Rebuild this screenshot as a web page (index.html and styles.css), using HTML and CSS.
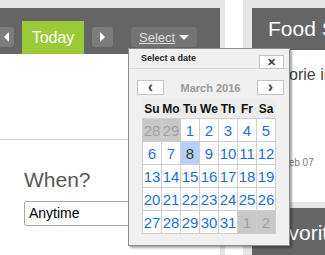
FILE: index.html
```html
<!doctype html>
<html lang="en">
  <head>
    <meta charset="UTF-8" />
    <title>Diary</title>
    <link rel="stylesheet" href="styles.css">
  </head>
  <body>
    <div class="layout">
      <div class="main">
        <div class="date-bar">
          <button class="nav-btn prev"><span class="tri-left"></span></button>
          <div class="today-tab">Today</div>
          <button class="nav-btn next"><span class="tri-right"></span></button>
          <a class="select-link" href="#"><span>Select</span> <span class="tri-down"></span></a>
        </div>
        <div class="main-body">
          <div class="when-label">When?</div>
          <div class="when-input">Anytime</div>
        </div>
      </div>
      <div class="strip"></div>
      <div class="side">
        <div class="card-head">Food Summary</div>
        <div class="card-body">
          <div class="card-text">Calorie intake</div>
          <div class="card-date">Sat, Feb 07</div>
        </div>
        <div class="card-head second">Favorites</div>
      </div>
    </div>

    <div class="datepicker">
      <div class="dp-header">
        <span class="dp-title">Select a date</span>
        <button class="dp-close">&#x2715;</button>
      </div>
      <div class="dp-month">
        <button class="dp-arrow">&lsaquo;</button>
        <span class="dp-month-name">March 2016</span>
        <button class="dp-arrow">&rsaquo;</button>
      </div>
      <table class="dp-grid">
        <thead>
          <tr><th>Su</th><th>Mo</th><th>Tu</th><th>We</th><th>Th</th><th>Fr</th><th>Sa</th></tr>
        </thead>
        <tbody>
          <tr><td class="other">28</td><td class="other">29</td><td>1</td><td>2</td><td>3</td><td>4</td><td>5</td></tr>
          <tr><td>6</td><td>7</td><td class="selected">8</td><td>9</td><td>10</td><td>11</td><td>12</td></tr>
          <tr><td>13</td><td>14</td><td>15</td><td>16</td><td>17</td><td>18</td><td>19</td></tr>
          <tr><td>20</td><td>21</td><td>22</td><td>23</td><td>24</td><td>25</td><td>26</td></tr>
          <tr><td>27</td><td>28</td><td>29</td><td>30</td><td>31</td><td class="other">1</td><td class="other">2</td></tr>
        </tbody>
      </table>
    </div>
  </body>
</html>
```

FILE: styles.css
```css
body {
  font-family: "Liberation Sans", Arial, sans-serif;
  margin: 0;
  background: #e6e6e6;
  width: 325px;
  height: 255px;
  overflow: hidden;
  position: relative;
}

.layout {
  display: flex;
  height: 255px;
}

.main {
  width: 220px;
  margin-top: 8px;
  background: white;
  flex-shrink: 0;
}

.date-bar {
  height: 46px;
  background: #656565;
  display: flex;
  align-items: flex-end;
}

.nav-btn {
  width: 21px;
  height: 20px;
  margin-bottom: 7px;
  border: none;
  border-radius: 3px;
  background: #7c7c7c;
  padding: 0;
  display: flex;
  align-items: center;
  justify-content: center;
}

.nav-btn.prev {
  margin-left: -7px;
}

.nav-btn.next {
  margin-left: 8px;
}

.tri-left {
  border-right: 5px solid white;
  border-top: 5px solid transparent;
  border-bottom: 5px solid transparent;
  margin-left: 6px;
}

.tri-right {
  border-left: 5px solid white;
  border-top: 5px solid transparent;
  border-bottom: 5px solid transparent;
}

.today-tab {
  position: relative;
  margin-left: 8px;
  width: 62px;
  height: 33px;
  background: #9aca35;
  color: white;
  font-size: 16px;
  display: flex;
  align-items: center;
  justify-content: center;
}

.today-tab::after {
  content: "";
  position: absolute;
  left: 23px;
  bottom: -8px;
  border-top: 8px solid #9aca35;
  border-left: 8px solid transparent;
  border-right: 8px solid transparent;
}

.select-link {
  margin-left: 18px;
  margin-bottom: 7px;
  height: 20px;
  padding: 0 8px;
  border-radius: 4px;
  background: #747474;
  color: #dddddd;
  font-size: 13px;
  display: flex;
  align-items: center;
  gap: 4px;
}

.select-link span:first-child {
  text-decoration: underline;
}

.tri-down {
  border-top: 5px solid #eeeeee;
  border-left: 5px solid transparent;
  border-right: 5px solid transparent;
  margin-top: 1px;
}

.main-body {
  border-top: 86px solid white;
  position: relative;
  padding: 28px 0 0 24px;
}

.main-body::before {
  content: "";
  position: absolute;
  left: 0;
  right: 0;
  top: -1px;
  border-top: 1px solid #d2d2d2;
}

.when-label {
  font-size: 21px;
  color: #585858;
  line-height: 24px;
}

.when-input {
  margin-top: 9px;
  width: 140px;
  height: 23px;
  border: 1px solid #a8a8a8;
  border-radius: 2px;
  font-size: 14px;
  line-height: 23px;
  padding-left: 4px;
  color: black;
}

.strip {
  width: 18px;
  margin-left: 5px;
  background: white;
  flex-shrink: 0;
}

.side {
  margin-left: 9px;
  margin-top: 8px;
  flex: 1;
  display: flex;
  flex-direction: column;
  overflow: hidden;
  white-space: nowrap;
}

.card-head {
  height: 42px;
  background: #656565;
  color: white;
  font-size: 21px;
  padding-left: 16px;
  display: flex;
  align-items: center;
}

.card-head.second {
  margin-top: 6px;
  flex: 1;
  padding-top: 2px;
  padding-left: 12px;
}

.card-body {
  background: white;
  height: 152px;
  padding-left: 16px;
}

.card-text {
  margin-top: 16px;
  margin-left: -3px;
  font-size: 16px;
  color: #444;
}

.card-date {
  margin-top: 73px;
  margin-left: -6px;
  font-size: 10px;
  color: #777;
}

.datepicker {
  position: absolute;
  left: 128px;
  top: 48px;
  width: 160px;
  height: 196px;
  background: #f0f0f0;
  border: 1px solid #8c8c8c;
  box-shadow: 2px 2px 2px rgba(0, 0, 0, 0.35);
}

.dp-header {
  height: 19px;
  border-bottom: 1px solid #d8d8d8;
  display: flex;
  align-items: center;
  justify-content: space-between;
  padding: 0 5px 0 12px;
  position: relative;
}

.dp-title {
  font-size: 9px;
  font-weight: bold;
  color: #222;
  margin-top: -2px;
}

.dp-close {
  width: 25px;
  height: 14px;
  margin-top: 7px;
  border: 1px solid #c4c4c4;
  background: white;
  color: #444;
  font-size: 11px;
  font-weight: bold;
  line-height: 10px;
  padding: 0;
}

.dp-month {
  display: flex;
  align-items: center;
  justify-content: space-between;
  padding: 11px 5px 0 8px;
}

.dp-arrow {
  width: 27px;
  height: 15px;
  border: 1px solid #c4c4c4;
  background: white;
  color: #444;
  font-size: 16px;
  font-weight: bold;
  line-height: 10px;
  padding: 0 0 2px;
}

.dp-month-name {
  font-size: 11px;
  font-weight: bold;
  color: #9a9a9a;
}

.dp-grid {
  margin: 4px 0 0 13px;
  border-collapse: collapse;
  table-layout: fixed;
}

.dp-grid th {
  width: 19px;
  height: 19px;
  padding: 0;
  font-size: 12px;
  color: #111;
  background: #ececec;
}

.dp-grid td {
  height: 22px;
  padding: 0;
  text-align: center;
  font-size: 15px;
  color: #1f6fcf;
  background: white;
  border: 1px solid #cfcfcf;
}

.dp-grid td.other {
  background: #c8c8c8;
  color: #a2a2a2;
}

.dp-grid td.selected {
  background: #b3d1f6;
  color: #333;
}
```
